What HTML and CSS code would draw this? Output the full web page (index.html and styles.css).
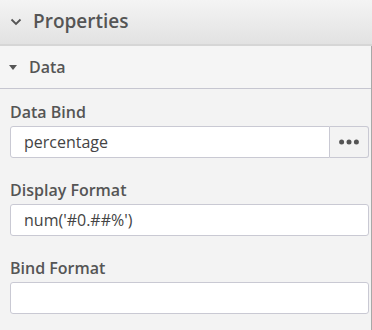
FILE: index.html
```html
<!DOCTYPE html>
<html lang="en">
<head>
  <meta charset="UTF-8" />
  <title>Properties</title>
  <link rel="stylesheet" href="styles.css">
</head>
<body>
  <div class="panel">
    <div class="panel-header">
      <svg class="chevron" width="12" height="8" viewBox="0 0 12 8"><path d="M1.5 1.5 L6 6 L10.5 1.5" fill="none" stroke="#555" stroke-width="1.8"/></svg>
      <span>Properties</span>
    </div>
    <div class="panel-body">
      <div class="section-header">
        <span class="caret"></span>
        <span>Data</span>
      </div>
      <div class="fields">
        <div class="field">
          <label>Data Bind</label>
          <div class="input-group">
            <input type="text" value="percentage">
            <button class="more">
              <svg width="20" height="6" viewBox="0 0 20 6"><circle cx="2.6" cy="3" r="2.5" fill="#555"/><circle cx="10" cy="3" r="2.5" fill="#555"/><circle cx="17.4" cy="3" r="2.5" fill="#555"/></svg>
            </button>
          </div>
        </div>
        <div class="field">
          <label>Display Format</label>
          <input type="text" value="num('#0.##%')">
        </div>
        <div class="field">
          <label>Bind Format</label>
          <input type="text" value="">
        </div>
      </div>
    </div>
  </div>
</body>
</html>
```

FILE: styles.css
```css
body {
  margin: 0;
  font-family: 'Open Sans', sans-serif;
  background: #f3f3f3;
  color: #555;
}
.panel {
  width: 372px;
  height: 330px;
  overflow: hidden;
}
.panel-header {
  height: 44px;
  display: flex;
  align-items: center;
  gap: 11px;
  padding-left: 10px;
  background: linear-gradient(#f4f4f4, #e2e2e2);
  border-bottom: 2px solid #d6d6d6;
  font-size: 19px;
  font-weight: 600;
}
.panel-header span {
  margin-top: -2px;
}
.panel-body {
  border-right: 1px solid #a8a8a8;
  height: 300px;
}
.section-header {
  height: 42px;
  display: flex;
  align-items: center;
  gap: 12px;
  padding-left: 9px;
  background: #f5f5f5;
  border-bottom: 1px solid #c6c6d0;
  font-size: 16px;
  font-weight: 600;
}
.caret {
  width: 0;
  height: 0;
  border-left: 4.5px solid transparent;
  border-right: 4.5px solid transparent;
  border-top: 5px solid #555;
}
.fields {
  padding: 13px 2px 0 10px;
}
.field {
  margin-bottom: 22px;
}
label {
  display: block;
  font-size: 16px;
  font-weight: 600;
  line-height: 20px;
  margin-bottom: 4px;
}
input[type="text"] {
  width: 100%;
  height: 32px;
  box-sizing: border-box;
  border: 1px solid #c9c9d3;
  border-radius: 3px;
  background: #fff;
  padding: 0 13px;
  font-family: 'Open Sans', sans-serif;
  font-size: 16px;
  color: #444;
}
.input-group {
  display: flex;
}
.input-group input[type="text"] {
  border-radius: 3px 0 0 3px;
}
.more {
  flex: none;
  display: flex;
  align-items: center;
  justify-content: center;
  width: 39px;
  height: 32px;
  border: 1px solid #c9c9d3;
  border-left: none;
  border-radius: 0 3px 3px 0;
  background: #f3f3f3;
  padding: 0;
}
```
